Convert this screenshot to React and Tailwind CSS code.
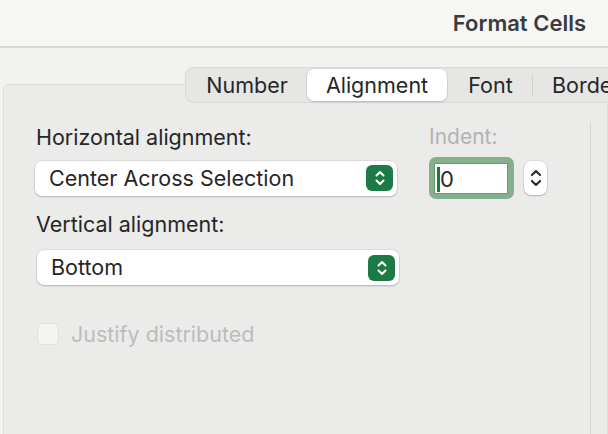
import React from "react";

function UpDownGlyph({ className = "", stroke = "white", width = 2 }) {
  return (
    <svg viewBox="0 0 12 18" className={className} fill="none">
      <path d="M2.5 6.5 L6 3 L9.5 6.5" stroke={stroke} strokeWidth={width} strokeLinecap="round" strokeLinejoin="round" />
      <path d="M2.5 11.5 L6 15 L9.5 11.5" stroke={stroke} strokeWidth={width} strokeLinecap="round" strokeLinejoin="round" />
    </svg>
  );
}

function PopUp({ value, className = "" }) {
  return (
    <div
      className={`flex h-[35px] w-[362px] items-center justify-between rounded-[7px] bg-white pl-[14px] pr-[4px] shadow-[0_0_0_0.5px_rgba(0,0,0,0.12),0_1px_2px_rgba(0,0,0,0.2)] ${className}`}
    >
      <span className="text-[21.5px] text-[#262626]">{value}</span>
      <div className="flex h-[26px] w-[27px] items-center justify-center rounded-[6px] bg-[#1e7a45]">
        <UpDownGlyph className="h-[18px] w-[12px]" />
      </div>
    </div>
  );
}

function Tab({ label, active, className = "" }) {
  return (
    <div
      className={`flex h-[32px] items-center justify-center text-[21.5px] text-[#262626] ${
        active ? "rounded-[7px] bg-white shadow-[0_0_0_0.5px_rgba(0,0,0,0.1),0_1px_2px_rgba(0,0,0,0.15)]" : ""
      } ${className}`}
    >
      {label}
    </div>
  );
}

export default function App() {
  return (
    <div className="relative h-[434px] w-[608px] overflow-hidden bg-[#f2f2f1] font-['Inter',sans-serif]">
      {/* Title bar */}
      <div className="flex h-[48px] items-center justify-end border-b-[2px] border-[#d7d7d6] bg-[#f6f6f5] pr-[22px]">
        <span className="text-[22px] font-semibold text-[#3b3b3b]">Format Cells</span>
      </div>

      {/* Tab strip sitting on the panel's top edge; runs past the window's right edge */}
      <div className="absolute left-[185px] top-[67px] z-10 flex h-[36px] w-[480px] items-center whitespace-nowrap rounded-[8px] border border-[#d9d9d8] bg-[#e6e6e5] px-[2px]">
        <Tab label="Number" className="w-[118px]" />
        <Tab label="Alignment" active className="ml-[1px] w-[140px]" />
        <Tab label="Font" className="w-[85px] pl-[2px]" />
        <div className="h-[20px] w-px bg-[#cfcfce]" />
        <Tab label="Border" className="pl-[19px]" />
      </div>

      {/* Tab panel */}
      <div className="ml-[3px] mt-[36px] flex h-[400px] rounded-tl-[6px] border border-[#dcdcdb] bg-[#ebebea]">
        <div className="flex w-[586px] flex-col pl-[32px] pt-[40px]">
          <div className="flex items-end">
            <div className="w-[393px] text-[21.5px] leading-[24px] text-[#262626]">Horizontal alignment:</div>
            <div className="text-[21px] leading-[24px] text-[#b3b3b2]">Indent:</div>
          </div>

          <div className="mt-[8px] flex h-[42px] items-center">
            <PopUp value="Center Across Selection" className="-ml-[1px]" />
            <div className="ml-[32px] flex h-[42px] w-[85px] rounded-[7px] bg-[#85b08d] pb-[5px] pl-[5px] pr-[6px] pt-[6px]">
              <div className="relative flex flex-1 items-center border border-[#6c9a75] bg-white pl-[5px]">
                <span className="absolute left-[2px] top-[3px] h-[25px] w-[3px] bg-[#1d7a3e]" />
                <span className="text-[22px] leading-none text-[#2a2a2a]">0</span>
              </div>
            </div>
            <div className="ml-[10px] flex h-[34px] w-[23px] flex-col items-center justify-center rounded-[7px] bg-white shadow-[0_0_0_0.5px_rgba(0,0,0,0.12),0_1px_2px_rgba(0,0,0,0.2)]">
              <UpDownGlyph className="h-[26px] w-[14px]" stroke="#2a2a2a" width={1.8} />
            </div>
          </div>

          <div className="mt-[13px] text-[21.5px] leading-[24px] text-[#262626]">Vertical alignment:</div>

          <PopUp value="Bottom" className="ml-[1px] mt-[14px]" />

          <div className="ml-[1px] mt-[37px] flex items-center gap-[12px]">
            <div className="h-[22px] w-[22px] rounded-[5px] border border-[#dfdfde] bg-[#f3f3f2]" />
            <span className="text-[21.5px] leading-[24px] text-[#bcbcbb]">Justify distributed</span>
          </div>
        </div>

        {/* Neighbouring group box edge */}
        <div className="mt-[38px] flex-1 border-l border-[#d3d3d2]" />
      </div>
    </div>
  );
}
